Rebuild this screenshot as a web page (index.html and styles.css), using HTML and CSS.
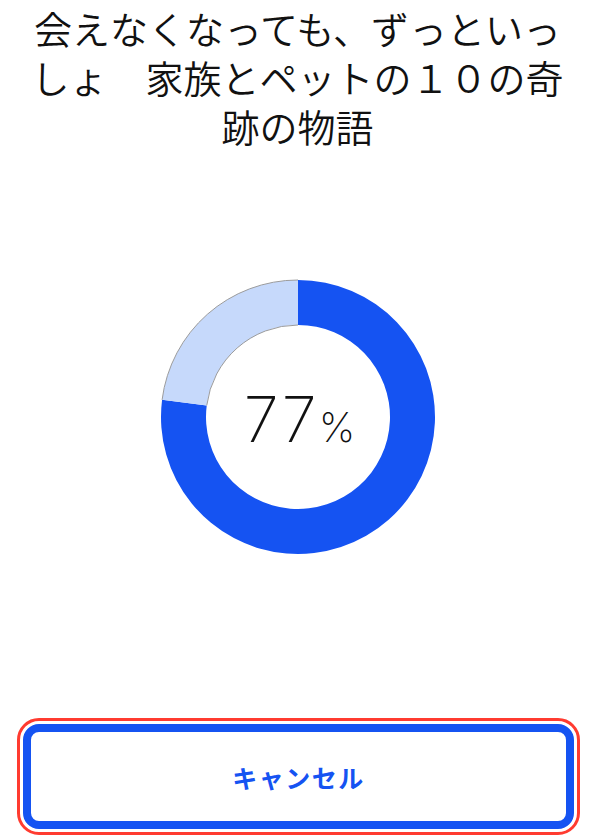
FILE: index.html
```html
<!DOCTYPE html>
<html lang="ja">
<head>
<meta charset="utf-8">
<link rel="stylesheet" href="styles.css">
</head>
<body>
<main class="screen">
  <h1 class="title">会えなくなっても、ずっといっしょ　家族とペットの１０の奇跡の物語</h1>
  <div class="progress">
    <svg class="donut" viewBox="0 0 276 276" width="276" height="276">
      <path class="done" d="M138 1 A137 137 0 1 1 2.08 120.83 L46.73 126.47 A92 92 0 1 0 138 46 Z"/>
      <path class="rest" d="M2.08 120.83 A137 137 0 0 1 138 1 L138 46 A92 92 0 0 0 46.73 126.47 Z"/>
      <path class="rest-edge" d="M2.08 120.83 A137 137 0 0 1 138 1 M138 46 A92 92 0 0 0 46.73 126.47"/>
    </svg>
    <div class="percent"><span class="num">77</span><span class="sign">%</span></div>
  </div>
  <div class="focus-ring">
    <button class="cancel">キャンセル</button>
  </div>
</main>
</body>
</html>
```
FILE: styles.css
```css
html, body {
  margin: 0;
  padding: 0;
  background: #ffffff;
}
.screen {
  width: 595px;
  height: 836px;
  display: flex;
  flex-direction: column;
  align-items: center;
  box-sizing: border-box;
  padding-top: 3px;
}
.title {
  margin: 0;
  width: 548px;
  font-family: "Noto Sans CJK JP", sans-serif;
  font-weight: 350;
  font-size: 38px;
  line-height: 49px;
  text-align: center;
  color: #111111;
}
.progress {
  position: relative;
  width: 276px;
  height: 276px;
  margin-top: 129px;
}
.donut {
  display: block;
}
.done {
  fill: #1553f2;
}
.rest {
  fill: #c6d9fb;
}
.rest-edge {
  fill: none;
  stroke: #9c9c9c;
  stroke-width: 1;
}
.percent {
  position: absolute;
  left: 0;
  right: 0;
  top: 102px;
  padding-left: 4px;
  display: flex;
  justify-content: center;
  align-items: baseline;
  font-family: "Inter", sans-serif;
  font-weight: 200;
  color: #111111;
}
.num {
  font-size: 63px;
  letter-spacing: 2px;
}
.sign {
  font-size: 41px;
}
.focus-ring {
  margin-top: auto;
  margin-bottom: 1px;
  margin-left: 2px;
  width: 563px;
  box-sizing: border-box;
  border: 3px solid #ff3b30;
  border-radius: 22px;
  padding: 3px;
}
.cancel {
  display: block;
  width: 100%;
  height: 105px;
  box-sizing: border-box;
  border: 8px solid #1553f2;
  border-radius: 16px;
  background: #ffffff;
  color: #1553f2;
  font-family: "Noto Sans CJK JP", sans-serif;
  font-weight: 700;
  font-size: 25px;
  letter-spacing: 1.5px;
  cursor: pointer;
}
```
